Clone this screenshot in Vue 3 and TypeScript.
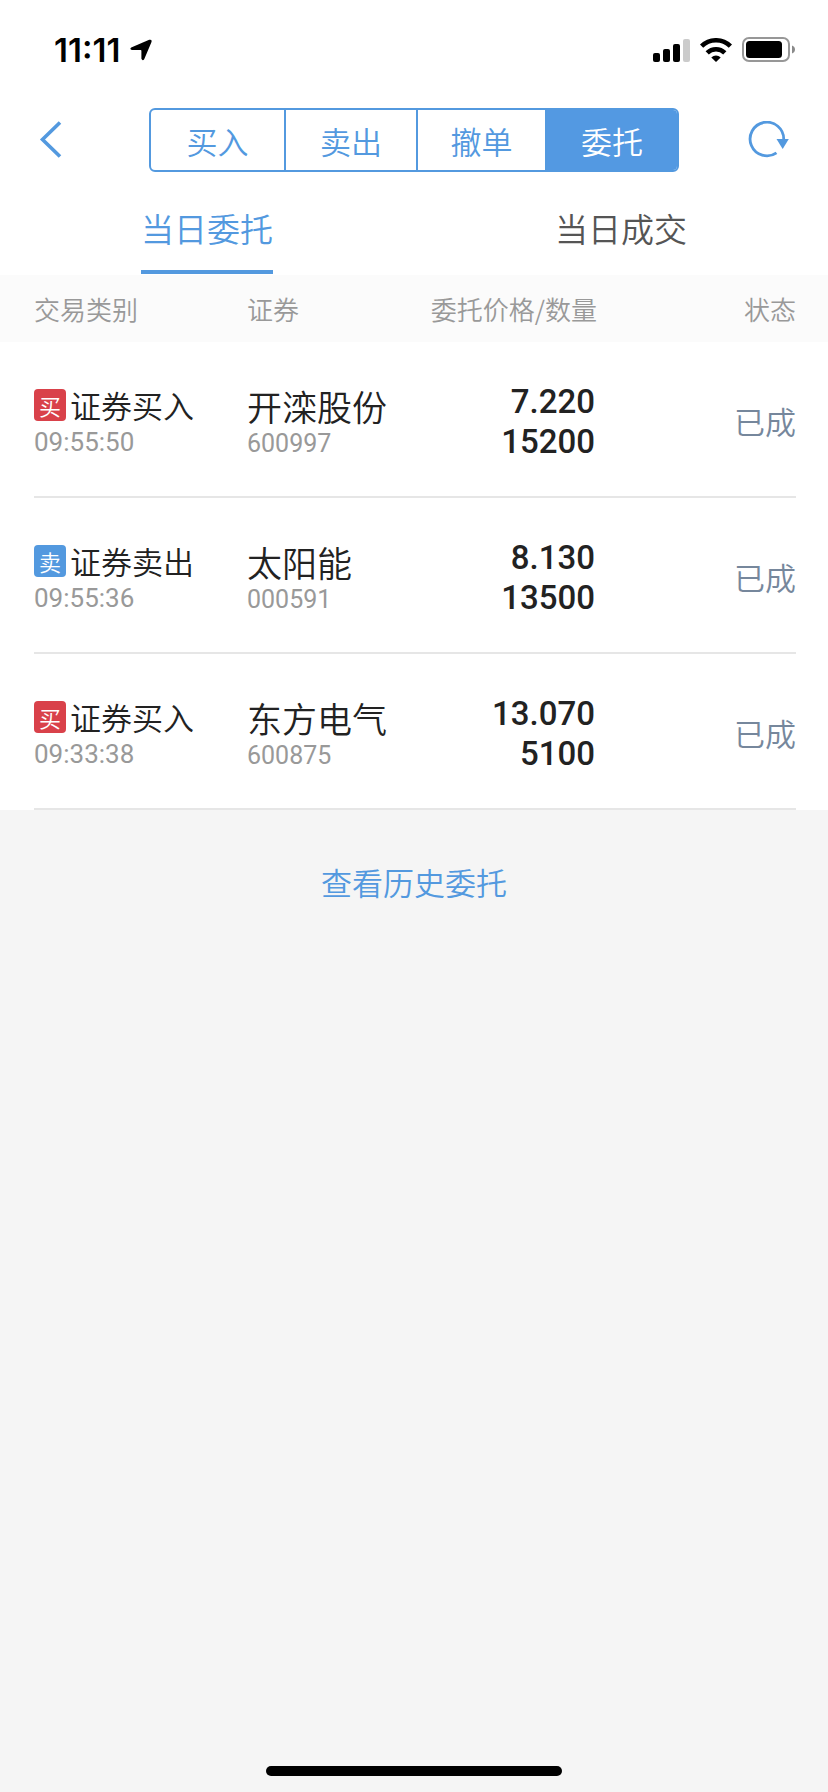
<script setup lang="ts">
import { ref } from 'vue'

interface Order {
  side: 'buy' | 'sell'
  type: string
  time: string
  name: string
  code: string
  price: string
  amount: string
  status: string
}

const sections = ['买入', '卖出', '撤单', '委托']
const activeSection = ref('委托')

const tabs = ['当日委托', '当日成交']
const activeTab = ref('当日委托')

const orders: Order[] = [
  { side: 'buy', type: '证券买入', time: '09:55:50', name: '开滦股份', code: '600997', price: '7.220', amount: '15200', status: '已成' },
  { side: 'sell', type: '证券卖出', time: '09:55:36', name: '太阳能', code: '000591', price: '8.130', amount: '13500', status: '已成' },
  { side: 'buy', type: '证券买入', time: '09:33:38', name: '东方电气', code: '600875', price: '13.070', amount: '5100', status: '已成' },
]
</script>

<template>
  <div class="screen">
    <header class="top">
      <div class="status-bar">
        <div class="clock">
          <span>11:11</span>
          <svg width="22" height="22" viewBox="0 0 22 22" aria-hidden="true">
            <path d="M1.200 8.600 19.200 .8Q22.400 .2 21.400 3.200L14.200 20.200Q12.600 22.400 11.400 19.800V11.800Q11.400 11 10.600 11H2Q-.8 10.200 1.200 8.600Z" />
          </svg>
        </div>
        <div class="indicators">
          <svg width="37" height="24" viewBox="0 0 37 24" aria-hidden="true">
            <rect x="0" y="15" width="7" height="9" rx="2" />
            <rect x="10" y="11" width="7" height="13" rx="2" />
            <rect x="20" y="6" width="7" height="18" rx="2" />
            <rect x="30" y="1" width="7" height="23" rx="2" fill="#cbcbcb" />
          </svg>
          <svg width="32" height="24" viewBox="0 0 32 24" aria-hidden="true">
            <g fill="none" stroke="#000" stroke-width="4.600">
              <path d="M1.600 8.200a20.500 20.500 0 0 1 28.800 0" />
              <path d="M7.200 14.800a12.600 12.600 0 0 1 17.600 0" />
            </g>
            <path d="M11.300 19.400a7 7 0 0 1 9.400 0L16 24Z" />
          </svg>
          <svg width="54" height="26" viewBox="0 0 54 26" aria-hidden="true">
            <rect x="1" y="1" width="46" height="23" rx="6" fill="none" stroke="#979797" stroke-width="2" />
            <rect x="4" y="4" width="36" height="17" rx="3.500" />
            <path d="M50 8.500q3 1.200 3 4t-3 4Z" fill="#8a8a8a" />
          </svg>
        </div>
      </div>

      <nav class="nav">
        <button type="button" class="icon-button back" aria-label="返回">
          <svg width="24" height="38" viewBox="0 0 24 38" aria-hidden="true">
            <path d="M22 1.500 4.500 18.500l17.500 17" fill="none" stroke="#5399df" stroke-width="3.600" />
          </svg>
        </button>
        <div class="segments">
          <button
            v-for="item in sections"
            :key="item"
            type="button"
            class="segment"
            :class="{ active: item === activeSection }"
            @click="activeSection = item"
          >
            {{ item }}
          </button>
        </div>
        <button type="button" class="icon-button refresh" aria-label="刷新">
          <svg width="42" height="38" viewBox="0 0 42 38" aria-hidden="true">
            <path d="M35.700 18.500A16.800 16.800 0 1 0 28.500 31.800" fill="none" stroke="#5399df" stroke-width="2.800" />
            <path d="M28.500 18h12.300l-6.100 10Z" fill="#5399df" />
          </svg>
        </button>
      </nav>

      <div class="tabs">
        <button
          v-for="tab in tabs"
          :key="tab"
          type="button"
          class="tab"
          :class="{ active: tab === activeTab }"
          @click="activeTab = tab"
        >
          <span>{{ tab }}</span>
        </button>
      </div>
    </header>

    <table class="orders">
      <thead>
        <tr>
          <th scope="col">交易类别</th>
          <th scope="col">证券</th>
          <th scope="col" class="right">委托价格/数量</th>
          <th scope="col" class="right">状态</th>
        </tr>
      </thead>
      <tbody>
        <tr v-for="order in orders" :key="order.code">
          <td>
            <div class="type">
              <span class="badge" :class="order.side">{{ order.side === 'buy' ? '买' : '卖' }}</span>
              <span>{{ order.type }}</span>
            </div>
            <div class="time">{{ order.time }}</div>
          </td>
          <td>
            <div class="name">{{ order.name }}</div>
            <div class="code">{{ order.code }}</div>
          </td>
          <td class="figures">
            <div>{{ order.price }}</div>
            <div>{{ order.amount }}</div>
          </td>
          <td class="state">{{ order.status }}</td>
        </tr>
      </tbody>
    </table>

    <a class="history" href="#history">查看历史委托</a>
    <div class="home-indicator"></div>
  </div>
</template>

<style>
body {
  background: #f5f5f5;
}
</style>

<style scoped>
.screen {
  display: flex;
  flex-direction: column;
  min-height: 100vh;
  background: #f5f5f5;
  color: #222;
  font-family: 'Noto Sans CJK SC', sans-serif;
  font-weight: 350;
}

button {
  margin: 0;
  padding: 0;
  border: 0;
  background: none;
  color: inherit;
  font: inherit;
  cursor: pointer;
}

svg {
  display: block;
}

.top {
  background: #fff;
}

.status-bar {
  display: flex;
  justify-content: space-between;
  align-items: center;
  height: 100px;
  padding: 0 32px 0 54px;
  color: #000;
}

.clock {
  display: flex;
  align-items: center;
  gap: 10px;
  font: 600 33px/40px Inter, sans-serif;
}

.indicators {
  display: flex;
  align-items: center;
  gap: 10px;
}

.nav {
  display: flex;
  justify-content: space-between;
  align-items: center;
  height: 80px;
  padding: 0 38px;
}

.icon-button {
  display: flex;
  width: 42px;
}

.segments {
  display: grid;
  grid-template-columns: 133fr 132fr 129fr 132fr;
  width: 530px;
  height: 64px;
  box-sizing: border-box;
  overflow: hidden;
  border: 2px solid #5399df;
  border-radius: 6px;
  color: #5399df;
}

.segment {
  font-size: 31px;
  line-height: 62px;
}

.segment + .segment {
  border-left: 2px solid #5399df;
}

.segment.active {
  background: #5399e2;
  color: #fff;
}

.tabs {
  display: grid;
  grid-template-columns: 1fr 1fr;
  height: 95px;
  color: #555;
}

.tab {
  display: flex;
  justify-content: center;
  font-size: 33px;
  line-height: 96px;
}

.tab span {
  height: 94px;
  box-sizing: border-box;
  border-bottom: 4px solid transparent;
}

.tab.active {
  color: #5399df;
}

.tab.active span {
  border-color: #5399df;
}

.orders,
.orders thead,
.orders tbody {
  display: block;
}

.orders {
  background: #fff;
}

.orders thead {
  background: #fbfbfb;
}

.orders tr {
  display: grid;
  grid-template-columns: 213fr 150fr 200fr 199fr;
  margin: 0 32px 0 34px;
}

.orders th,
.orders td {
  padding: 0;
  text-align: left;
  white-space: nowrap;
}

.orders th {
  color: #999;
  font-size: 26px;
  font-weight: 350;
  line-height: 67px;
}

.orders th.right {
  text-align: right;
}

.orders tbody tr {
  height: 156px;
  box-sizing: border-box;
  border-bottom: 2px solid #e6e6e6;
}

.orders td {
  padding-top: 41px;
}

.type {
  display: flex;
  align-items: center;
  gap: 4px;
  font-size: 31px;
  line-height: 44px;
}

.badge {
  width: 32px;
  height: 32px;
  border-radius: 4px;
  color: #fff;
  font-size: 22px;
  line-height: 32px;
  text-align: center;
}

.badge.buy {
  background: #d9414a;
}

.badge.sell {
  background: #5399df;
}

.time,
.code {
  color: #999;
  font: 400 26px/30px Roboto, sans-serif;
}

.name {
  font-size: 35px;
  line-height: 46px;
}

.code {
  font-size: 25px;
}

.orders .figures {
  padding: 40px 2px 0 0;
  text-align: right;
  font: 500 33px/40px Roboto, sans-serif;
}

.orders .state {
  padding-top: 0;
  color: #76879c;
  font-size: 31px;
  line-height: 158px;
  text-align: right;
}

.history {
  align-self: center;
  margin-top: 49px;
  color: #5399df;
  font-size: 31px;
  line-height: 46px;
  text-decoration: none;
}

.home-indicator {
  align-self: center;
  width: 296px;
  height: 10px;
  margin: auto 0 16px;
  border-radius: 5px;
  background: #000;
}
</style>
